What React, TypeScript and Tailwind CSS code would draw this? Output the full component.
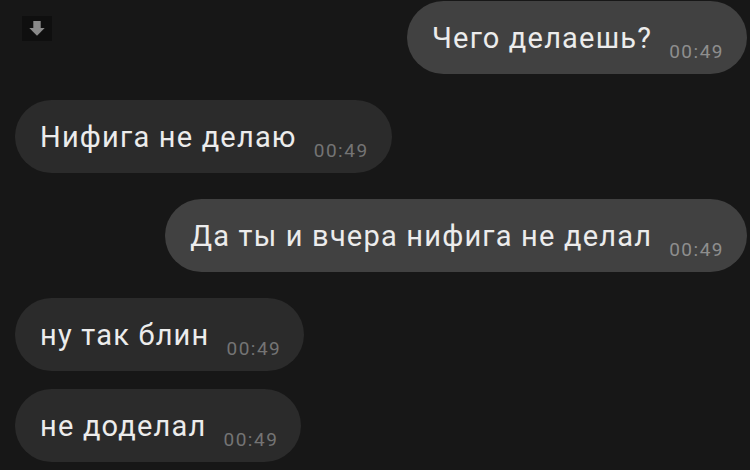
const messages = [
  { text: 'Нифига не делаю', out: false },
  { text: 'Да ты и вчера нифига не делал', out: true },
  { text: 'ну так блин', out: false },
  { text: 'не доделал', out: false, tight: true },
];

function Bubble({ text, out }: { text: string; out: boolean }) {
  return (
    <div
      className={`flex items-end h-[73px] rounded-full pl-[25px] pr-[23px] pb-[13px] ${
        out ? 'bg-[#414141]' : 'bg-[#2b2b2b]'
      }`}
    >
      <span className="text-[29px] leading-none text-[#ececec] mb-[8px] tracking-[1.2px]">{text}</span>
      <span
        className={`ml-[17px] text-[19px] leading-none tracking-[1.5px] ${out ? 'text-[#8e8e8e]' : 'text-[#747474]'}`}
      >
        00:49
      </span>
    </div>
  );
}

export default function App() {
  return (
    <div
      className="w-[750px] h-[470px] bg-[#171717] overflow-hidden pl-[15px] pr-[3px] pt-[1px]"
      style={{ fontFamily: 'Roboto, "Noto Sans", sans-serif' }}
    >
      {/* top row: download icon + my first message */}
      <div className="flex justify-between">
        <svg width="30" height="25" viewBox="0 0 30 25" className="ml-[7px] mt-[15px]">
          <rect width="30" height="25" fill="#0f0f0f" />
          <rect x="11.3" y="5" width="7.4" height="7.5" fill="#8a8a8a" />
          <polygon points="7.3,12 22.7,12 15,19.7" fill="#8a8a8a" />
        </svg>
        <Bubble text="Чего делаешь?" out />
      </div>

      {messages.map((m, i) => (
        <div
          key={i}
          className={`flex ${m.out ? 'justify-end' : 'justify-start'} ${m.tight ? 'mt-[18px]' : 'mt-[26px]'}`}
        >
          <Bubble text={m.text} out={m.out} />
        </div>
      ))}
    </div>
  );
}
